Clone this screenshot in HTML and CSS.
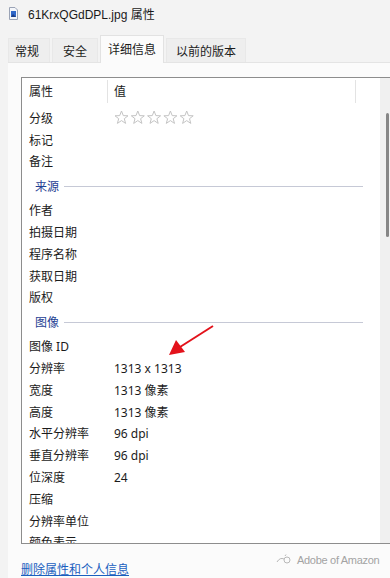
FILE: index.html
```html
<!DOCTYPE html>
<html lang="zh-CN">
<head>
<meta charset="utf-8">
<link rel="stylesheet" href="styles.css">
</head>
<body>
<div class="win">
  <div class="titlebar">
    <svg class="ficon" width="9" height="13" viewBox="0 0 9 13">
      <path d="M0.5 0.5 H6 L8.5 3 V12.5 H0.5 Z" fill="#f4f6fa" stroke="#9aa3b5"/>
      <rect x="2" y="4" width="5" height="6" fill="#2f67c9"/>
      <path d="M2 10 L4 7 L7 10 Z" fill="#1d3f86"/>
    </svg>
    <span class="title">61KrxQGdDPL.jpg 属性</span>
  </div>
  <div class="tabs">
    <div class="tab t1">常规</div>
    <div class="tab t2">安全</div>
    <div class="tab sel">详细信息</div>
    <div class="tab t4">以前的版本</div>
  </div>
  <div class="panel">
    <div class="list">
      <div class="listbody">
        <div class="hdr">
          <div class="hc1">属性</div>
          <div class="hc2">值</div>
        </div>
        <div class="rows">
          <div class="row"><span class="k">分级</span><span class="v stars">
            <svg width="84" height="15" viewBox="0 0 84 15">
              <g fill="none" stroke="#c4c4c4" stroke-width="1">
                <path id="st" d="M7.5 1 L9.3 5.6 L14 5.8 L10.3 8.7 L11.6 13.4 L7.5 10.6 L3.4 13.4 L4.7 8.7 L1 5.8 L5.7 5.6 Z"/>
                <use href="#st" x="16.3"/>
                <use href="#st" x="32.6"/>
                <use href="#st" x="48.9"/>
                <use href="#st" x="65.2"/>
              </g>
            </svg></span></div>
          <div class="row"><span class="k">标记</span></div>
          <div class="row"><span class="k">备注</span></div>
          <div class="grp"><span class="gt">来源</span><span class="gl"></span></div>
          <div class="row"><span class="k">作者</span></div>
          <div class="row"><span class="k">拍摄日期</span></div>
          <div class="row"><span class="k">程序名称</span></div>
          <div class="row"><span class="k">获取日期</span></div>
          <div class="row"><span class="k">版权</span></div>
          <div class="grp"><span class="gt">图像</span><span class="gl"></span></div>
          <div class="row"><span class="k">图像 ID</span></div>
          <div class="row"><span class="k">分辨率</span><span class="v">1313 x 1313</span></div>
          <div class="row"><span class="k">宽度</span><span class="v">1313 像素</span></div>
          <div class="row"><span class="k">高度</span><span class="v">1313 像素</span></div>
          <div class="row"><span class="k">水平分辨率</span><span class="v">96 dpi</span></div>
          <div class="row"><span class="k">垂直分辨率</span><span class="v">96 dpi</span></div>
          <div class="row"><span class="k">位深度</span><span class="v">24</span></div>
          <div class="row"><span class="k">压缩</span></div>
          <div class="row"><span class="k">分辨率单位</span></div>
          <div class="row"><span class="k">颜色表示</span></div>
        </div>
      </div>
      <div class="track"><div class="thumb"></div></div>
    </div>
    <div class="bottom">
      <a class="link" href="#">删除属性和个人信息</a>
    </div>
  </div>
  <div class="wm">
    <svg width="16" height="12" viewBox="0 0 16 12"><g fill="none" stroke="#b8b8b8" stroke-width="1"><path d="M1 8 Q4 3 8 5"/><circle cx="11" cy="6" r="3"/><path d="M9 2 L10 0.5"/></g></svg>
    <span>Adobe of Amazon</span>
  </div>
  <svg class="arrow" width="390" height="578" viewBox="0 0 390 578">
    <line x1="213" y1="326" x2="180" y2="347" stroke="#e3121b" stroke-width="2"/>
    <path d="M169 355 L176 340 L185 352 Z" fill="#e3121b"/>
  </svg>
</div>
</body>
</html>
```
FILE: styles.css
```css
* { box-sizing: border-box; }
html, body { margin: 0; padding: 0; }
body {
  width: 390px;
  height: 578px;
  overflow: hidden;
  background: #f3f3f3;
  font-family: "Noto Sans", "Noto Sans CJK SC", sans-serif;
  font-size: 12px;
  color: #1b1b1b;
}
.win {
  position: relative;
  width: 390px;
  height: 578px;
  display: flex;
  flex-direction: column;
}
.titlebar {
  height: 26px;
  display: flex;
  align-items: center;
  padding-left: 9px;
  gap: 10px;
}
.title {
  font-family: "Liberation Sans", "Noto Sans CJK SC", sans-serif;
  font-size: 12px;
  color: #1a1a1a;
}
.tabs {
  height: 36px;
  display: flex;
  align-items: flex-end;
  padding-left: 8px;
  gap: 2px;
}
.tab {
  height: 24px;
  display: flex;
  align-items: center;
  justify-content: center;
  background: #eeeeee;
  border: 1px solid #e8e8e8;
  border-bottom: none;
  color: #1b1b1b;
}
.t1 { width: 42px; padding-right: 4px; }
.t2 { width: 46px; }
.t4 { width: 80px; }
.tab.sel {
  width: 64px;
  height: 28px;
  background: #fbfbfb;
  border-color: #e2e2e2;
  padding-bottom: 2px;
  position: relative;
  z-index: 1;
  margin-bottom: -1px;
}
.panel {
  flex: 1;
  margin-left: 8px;
  background: #fbfbfb;
  border-top: 1px solid #e4e4e4;
  padding: 14px 0 0 13px;
  display: flex;
  flex-direction: column;
}
.list {
  width: 375px;
  height: 467px;
  flex: none;
  border: 1px solid #8d8d8d;
  border-right-color: #c8c8c8;
  background: #ffffff;
  display: flex;
}
.listbody {
  flex: 1;
  overflow: hidden;
}
.hdr {
  height: 25px;
  display: flex;
  align-items: center;
  padding-top: 1px;
}
.hc1 {
  width: 86px;
  padding-left: 7px;
  height: 23px;
  display: flex;
  align-items: center;
  border-right: 1px solid #e3e3e3;
}
.hc2 {
  width: 248px;
  padding-left: 6px;
  height: 23px;
  display: flex;
  align-items: center;
  border-right: 1px solid #e3e3e3;
}
.rows { padding-top: 4px; }
.row {
  height: 21.8px;
  display: flex;
  align-items: center;
  padding-left: 7px;
  white-space: nowrap;
}
.k { width: 85px; flex: none; }
.v { color: #1b1b1b; }
.stars { display: flex; align-items: center; }
.stars svg { display: block; }
.grp {
  height: 27px;
  display: flex;
  align-items: center;
  padding-left: 13px;
  padding-top: 1px;
}
.gt { color: #1f3f94; }
.gl {
  width: 299px;
  height: 1px;
  background: #c6c9d6;
  margin-left: 5px;
}
.track {
  width: 15px;
  flex: none;
  background: #f0f0f0;
  display: flex;
  justify-content: center;
  padding-top: 35px;
}
.thumb {
  width: 3px;
  height: 124px;
  border-radius: 2px;
  background: #868686;
}
.bottom {
  padding-top: 16px;
}
.link {
  color: #1a5fbf;
  text-decoration: underline;
  font-size: 12px;
}
.wm {
  position: absolute;
  left: 276px;
  top: 554px;
  display: flex;
  align-items: center;
  gap: 5px;
  color: #a3a3a3;
  font-family: "Liberation Sans", sans-serif;
  font-size: 11px;
  letter-spacing: -0.3px;
  white-space: nowrap;
}
.arrow {
  position: absolute;
  left: 0;
  top: 0;
  pointer-events: none;
}
```
